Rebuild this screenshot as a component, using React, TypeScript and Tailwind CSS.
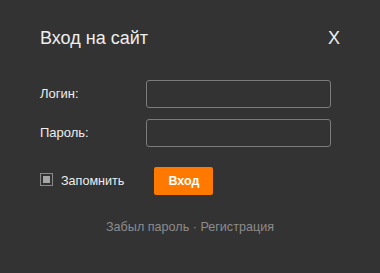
const LoginDialog = () => {
    return (
        <div className="w-[380px] h-[273px] bg-[#333333] text-[#eeeeee] font-['Liberation_Sans',Arial,sans-serif] pt-[26px] pl-[40px] pr-[40px]">
            <div className="flex flex-row items-center justify-between h-[24px]">
                <h1 className="text-[18px] leading-[24px] font-normal">Вход на сайт</h1>
                <span className="text-[18px] leading-[24px]">X</span>
            </div>

            <div className="mt-[30px] space-y-[11px]">
                <div className="flex flex-row items-center">
                    <label htmlFor="login" className="w-[106px] text-[13px]">Логин:</label>
                    <input
                        id="login"
                        type="text"
                        className="w-[185px] h-[28px] bg-transparent border border-[#7c7c7c] rounded-[3px] px-2 text-[13px] focus:outline-none"
                    />
                </div>
                <div className="flex flex-row items-center">
                    <label htmlFor="password" className="w-[106px] text-[13px]">Пароль:</label>
                    <input
                        id="password"
                        type="password"
                        className="w-[185px] h-[28px] bg-transparent border border-[#7c7c7c] rounded-[3px] px-2 text-[13px] focus:outline-none"
                    />
                </div>
            </div>

            <div className="flex flex-row items-center mt-[20px]">
                <label className="flex flex-row items-center">
                    <span className="w-[13px] h-[13px] mb-[2px] border border-[#8a8a8a] p-[2px] flex">
                        <span className="flex-1 bg-[#a6a6a6]" />
                    </span>
                    <span className="ml-[8px] text-[12.6px]">Запомнить</span>
                </label>
                <button className="ml-[30px] w-[59px] h-[28px] bg-[#ff7800] rounded-[2px] text-white font-bold text-[12.5px]">
                    Вход
                </button>
            </div>

            <p className="mt-[23px] -mx-[40px] text-center text-[12.6px] text-[#8c8c8c]">
                Забыл пароль · Регистрация
            </p>
        </div>
    )
}

export default function App() {
    return <LoginDialog />
}
